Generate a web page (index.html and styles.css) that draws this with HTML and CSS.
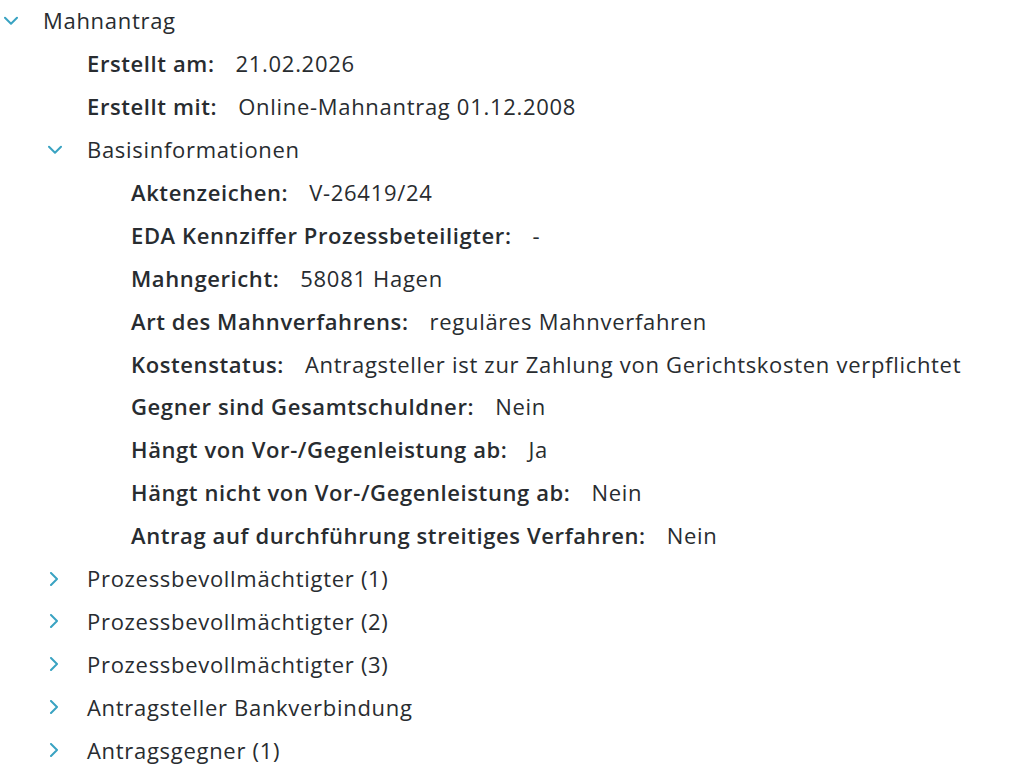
FILE: index.html
```html
<!DOCTYPE html>
<html lang="de">
<head>
    <meta charset="UTF-8">
    <title>Mahnantrag</title>
    <link rel="stylesheet" href="styles.css">
</head>
<body>
<div class="tree">
    <div class="node">
        <div class="row">
            <span class="chev"><svg viewBox="0 0 14 10" width="14" height="10"><path d="M1 1.8 L7 7.8 L13 1.8"/></svg></span>
            <span class="title">Mahnantrag</span>
        </div>
        <div class="children">
            <div class="field"><b>Erstellt am:</b><span>21.02.2026</span></div>
            <div class="field"><b>Erstellt mit:</b><span>Online-Mahnantrag 01.12.2008</span></div>
            <div class="node">
                <div class="row">
                    <span class="chev"><svg viewBox="0 0 14 10" width="14" height="10"><path d="M1 1.8 L7 7.8 L13 1.8"/></svg></span>
                    <span class="title">Basisinformationen</span>
                </div>
                <div class="children">
                    <div class="field"><b>Aktenzeichen:</b><span>V-26419/24</span></div>
                    <div class="field"><b>EDA Kennziffer Prozessbeteiligter:</b><span>-</span></div>
                    <div class="field"><b>Mahngericht:</b><span>58081 Hagen</span></div>
                    <div class="field"><b>Art des Mahnverfahrens:</b><span>reguläres Mahnverfahren</span></div>
                    <div class="field"><b>Kostenstatus:</b><span>Antragsteller ist zur Zahlung von Gerichtskosten verpflichtet</span></div>
                    <div class="field"><b>Gegner sind Gesamtschuldner:</b><span>Nein</span></div>
                    <div class="field"><b>Hängt von Vor-/Gegenleistung ab:</b><span>Ja</span></div>
                    <div class="field"><b>Hängt nicht von Vor-/Gegenleistung ab:</b><span>Nein</span></div>
                    <div class="field"><b>Antrag auf durchführung streitiges Verfahren:</b><span>Nein</span></div>
                </div>
            </div>
            <div class="node closed">
                <div class="row">
                    <span class="chev"><svg viewBox="0 0 10 14" width="10" height="14"><path d="M2 1 L8 7 L2 13"/></svg></span>
                    <span class="title">Prozessbevollmächtigter (1)</span>
                </div>
            </div>
            <div class="node closed">
                <div class="row">
                    <span class="chev"><svg viewBox="0 0 10 14" width="10" height="14"><path d="M2 1 L8 7 L2 13"/></svg></span>
                    <span class="title">Prozessbevollmächtigter (2)</span>
                </div>
            </div>
            <div class="node closed">
                <div class="row">
                    <span class="chev"><svg viewBox="0 0 10 14" width="10" height="14"><path d="M2 1 L8 7 L2 13"/></svg></span>
                    <span class="title">Prozessbevollmächtigter (3)</span>
                </div>
            </div>
            <div class="node closed">
                <div class="row">
                    <span class="chev"><svg viewBox="0 0 10 14" width="10" height="14"><path d="M2 1 L8 7 L2 13"/></svg></span>
                    <span class="title">Antragsteller Bankverbindung</span>
                </div>
            </div>
            <div class="node closed">
                <div class="row">
                    <span class="chev"><svg viewBox="0 0 10 14" width="10" height="14"><path d="M2 1 L8 7 L2 13"/></svg></span>
                    <span class="title">Antragsgegner (1)</span>
                </div>
            </div>
        </div>
    </div>
</div>
</body>
</html>
```
FILE: styles.css
```css
*{
    margin: 0;
    padding: 0;
    box-sizing: border-box;
}
body{
    background-color: #ffffff;
    font-family: "Open Sans", "Liberation Sans", sans-serif;
    font-size: 22px;
    letter-spacing: 0.7px;
    color: #282c30;
}
.row,
.field{
    height: 42.9px;
    display: flex;
    align-items: center;
    padding-bottom: 2px;
}
.chev{
    width: 43px;
    display: flex;
    align-items: center;
    padding-left: 4px;
    padding-top: 1px;
}
.chev svg path{
    fill: none;
    stroke: #3aa3c2;
    stroke-width: 2;
    stroke-linecap: round;
    stroke-linejoin: round;
}
.closed .chev{
    padding-left: 5px;
}
.children{
    padding-left: 44px;
}
.field{
    padding-left: 43px;
}
.field b{
    font-weight: 600;
    letter-spacing: 0.6px;
    margin-right: 21px;
}
```
